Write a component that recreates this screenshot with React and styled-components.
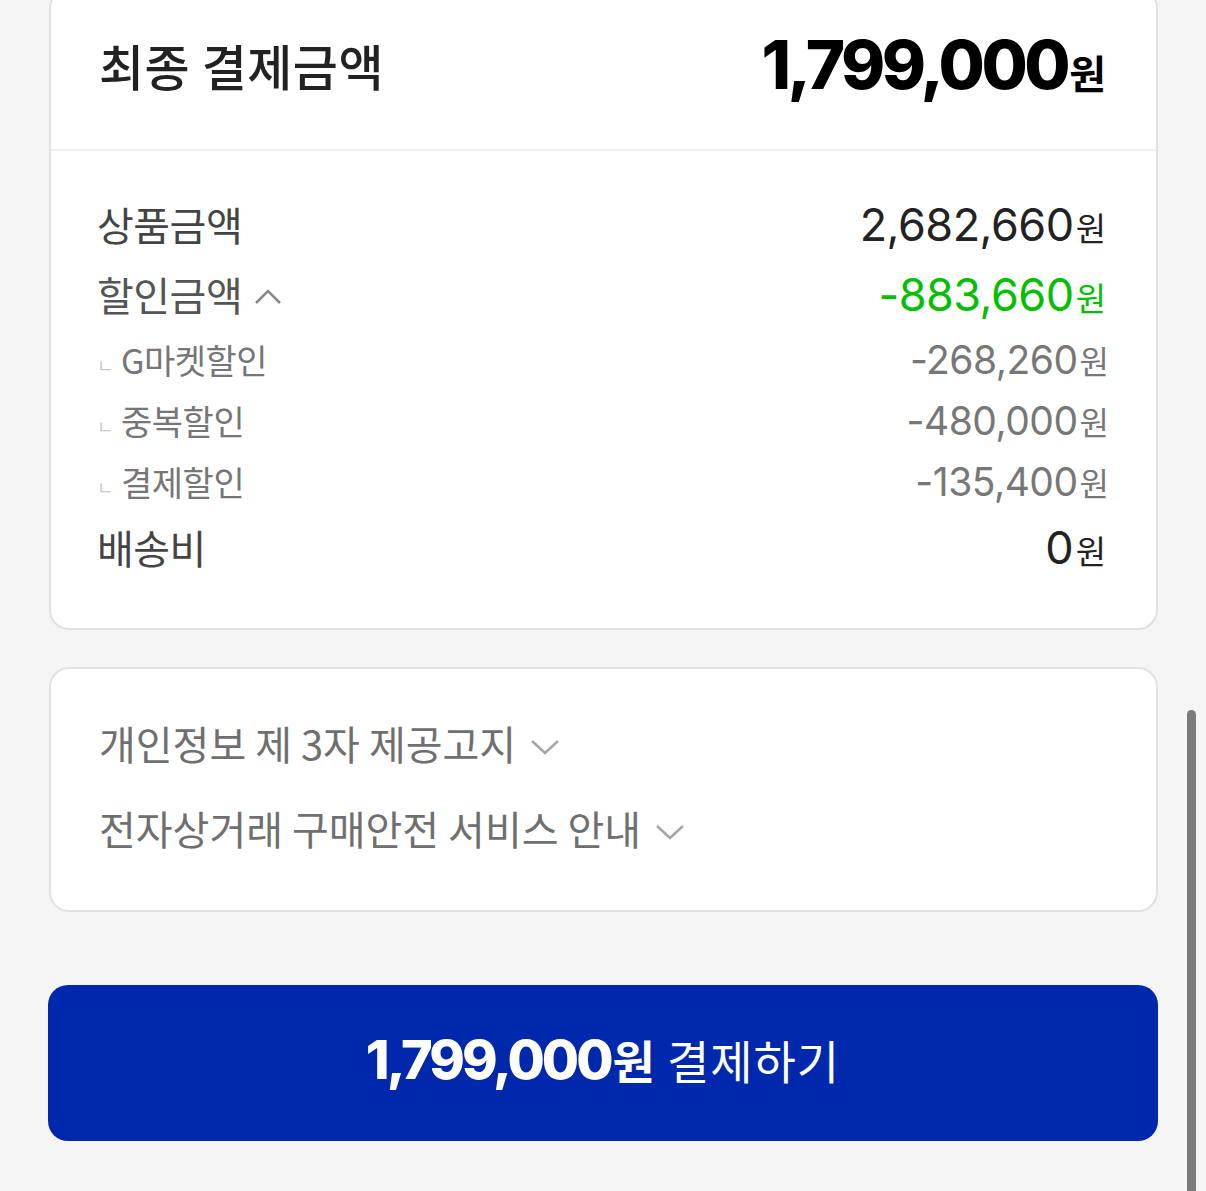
import React from "react";
import styled, { createGlobalStyle } from "styled-components";

const GlobalStyle = createGlobalStyle`
  html, body {
    margin: 0;
    padding: 0;
    background: #f5f5f5;
  }
  body {
    font-family: "Noto Sans CJK KR", "Noto Sans", sans-serif;
    overflow: hidden;
  }
`;

const Page = styled.div`
  width: 1206px;
  height: 1191px;
  position: relative;
  overflow: hidden;
  background: #f5f5f5;
`;

const Content = styled.div`
  margin-top: -12px;
  padding: 0 49px 0 48px;
  display: flex;
  flex-direction: column;
`;

const Card = styled.section`
  background: #fff;
  border: 2px solid #e2e2e2;
  border-radius: 20px;
  margin-left: 1px;
  margin-right: -1px;
`;

const TotalHeader = styled.div`
  display: flex;
  align-items: center;
  justify-content: space-between;
  height: 161px;
  padding: 0 50px 10px 48px;
  border-bottom: 2px solid #eeeeee;
  box-sizing: border-box;
`;

const TotalTitle = styled.h2`
  margin: 0;
  font-size: 49px;
  font-weight: 500;
  color: #222;
  letter-spacing: 0.5px;
`;

const TotalAmount = styled.div`
  display: flex;
  align-items: baseline;
  color: #000;
`;

const Num = styled.span`
  font-family: Inter, "Noto Sans", sans-serif;
  font-size: ${p => p.$size}px;
  font-weight: ${p => p.$weight || 400};
  letter-spacing: ${p => p.$spacing || 0}px;
`;

const Won = styled.span`
  font-family: "Noto Sans CJK KR", sans-serif;
  font-size: ${p => p.$size}px;
  font-weight: ${p => p.$weight || 400};
  margin-left: 2px;
`;

const Breakdown = styled.div`
  display: flex;
  flex-direction: column;
  padding: 38px 50px 46px 46px;
`;

const Row = styled.div`
  display: flex;
  align-items: center;
  justify-content: space-between;
  height: ${p => p.$h}px;
`;

const Label = styled.div`
  display: flex;
  align-items: center;
  font-size: ${p => p.$size}px;
  color: ${p => p.$color};
  letter-spacing: -0.5px;
`;

const SubMark = styled.span`
  font-size: 18px;
  color: #c8c8c8;
  margin-right: 8px;
  margin-top: 10px;
`;

const Value = styled.div`
  display: flex;
  align-items: baseline;
  color: ${p => p.$color};
  margin-right: ${p => p.$shift || 0}px;
`;

const Chevron = styled.svg`
  margin-left: ${p => p.$gap}px;
  margin-top: ${p => p.$top || 0}px;
`;

const Notices = styled(Card)`
  margin-top: 37px;
  padding: 51px 48px 60px 48px;
  display: flex;
  flex-direction: column;
  gap: 40px;
`;

const Notice = styled.div`
  display: flex;
  align-items: center;
  font-size: 40px;
  color: #6f6f6f;
  height: 45px;
`;

const PayButton = styled.button`
  margin-top: 73px;
  height: 156px;
  width: 1110px;
  padding: 0 0 8px 0;
  border: none;
  border-radius: 20px;
  background: #0028ad;
  color: #fff;
  display: flex;
  align-items: center;
  justify-content: center;
  gap: 12px;
  font-family: "Noto Sans CJK KR", sans-serif;
  cursor: pointer;
`;

const ButtonAmount = styled.span`
  display: flex;
  align-items: baseline;
`;

const ButtonLabel = styled.span`
  font-size: 46px;
  font-weight: 400;
  letter-spacing: 1px;
`;

const Scrollbar = styled.div`
  position: absolute;
  right: 10px;
  top: 710px;
  width: 9px;
  height: 520px;
  border-radius: 5px;
  background: #7a7a7a;
`;

const Up = () => (
  <Chevron $gap={12} $top={4} width="28" height="18" viewBox="0 0 28 18" fill="none">
    <path d="M2 16 L14 4 L26 16" stroke="#8a8a8a" strokeWidth="2.6" />
  </Chevron>
);

const Down = () => (
  <Chevron $gap={14} $top={8} width="30" height="18" viewBox="0 0 30 18" fill="none">
    <path d="M2 3 L15 15 L28 3" stroke="#a5a5a5" strokeWidth="2.4" />
  </Chevron>
);

const subItems = [
  { label: "G마켓할인", value: "-268,260" },
  { label: "중복할인", value: "-480,000" },
  { label: "결제할인", value: "-135,400" },
];

export default function App() {
  return (
    <Page>
      <GlobalStyle />
      <Content>
        <Card>
          <TotalHeader>
            <TotalTitle>최종 결제금액</TotalTitle>
            <TotalAmount>
              <Num $size={67} $weight={800} $spacing={-3.5}>1,799,000</Num>
              <Won $size={40} $weight={700}>원</Won>
            </TotalAmount>
          </TotalHeader>
          <Breakdown>
            <Row $h={70}>
              <Label $size={40} $color="#444">상품금액</Label>
              <Value $color="#222">
                <Num $size={45} $spacing={-0.5}>2,682,660</Num>
                <Won $size={33}>원</Won>
              </Value>
            </Row>
            <Row $h={70}>
              <Label $size={40} $color="#555">
                할인금액
                <Up />
              </Label>
              <Value $color="#00c000">
                <Num $size={45} $spacing={-0.5}>-883,660</Num>
                <Won $size={33}>원</Won>
              </Value>
            </Row>
            {subItems.map(item => (
              <Row $h={61} key={item.label}>
                <Label $size={34} $color="#767676">
                  <SubMark>ㄴ</SubMark>
                  {item.label}
                </Label>
                <Value $color="#777" $shift={-3}>
                  <Num $size={39} $spacing={-0.5}>{item.value}</Num>
                  <Won $size={32}>원</Won>
                </Value>
              </Row>
            ))}
            <Row $h={70}>
              <Label $size={40} $color="#444">배송비</Label>
              <Value $color="#222">
                <Num $size={45}>0</Num>
                <Won $size={33}>원</Won>
              </Value>
            </Row>
          </Breakdown>
        </Card>
        <Notices>
          <Notice>
            개인정보 제 3자 제공고지
            <Down />
          </Notice>
          <Notice>
            전자상거래 구매안전 서비스 안내
            <Down />
          </Notice>
        </Notices>
        <PayButton>
          <ButtonAmount>
            <Num $size={54} $weight={800} $spacing={-3}>1,799,000</Num>
            <Won $size={46} $weight={700}>원</Won>
          </ButtonAmount>
          <ButtonLabel>결제하기</ButtonLabel>
        </PayButton>
      </Content>
      <Scrollbar />
    </Page>
  );
}
